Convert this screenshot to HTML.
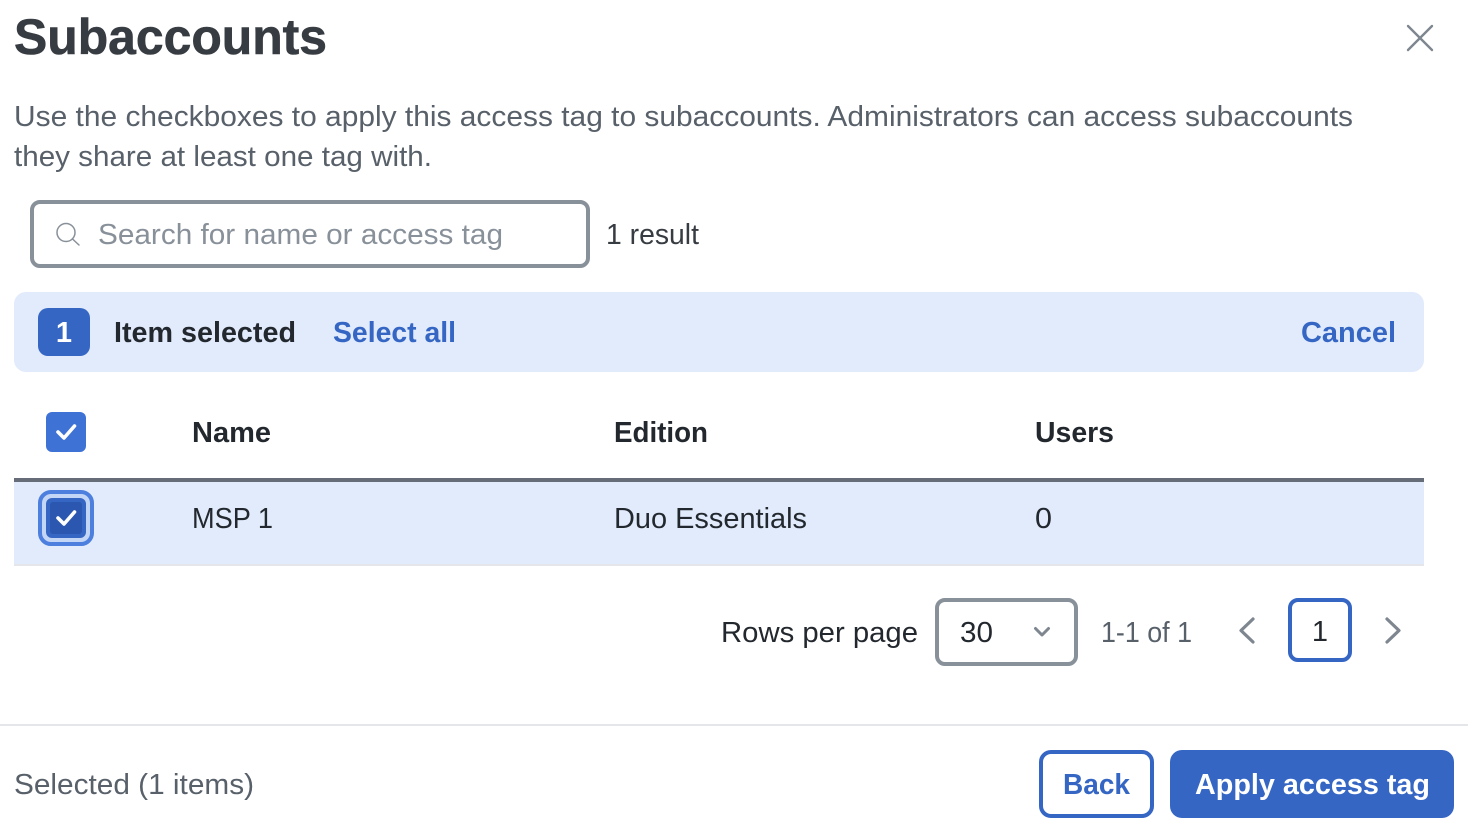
<!DOCTYPE html>
<html><head><meta charset="utf-8"><style>
html,body{margin:0;padding:0;background:#fff;width:1468px;height:832px;overflow:hidden}
svg{display:block}
text{font-family:"Liberation Sans",sans-serif;font-size:29px;white-space:pre}
.b{font-weight:700}
</style></head><body>
<svg width="1468" height="832" viewBox="0 0 1468 832" xmlns="http://www.w3.org/2000/svg">
<rect width="1468" height="832" fill="#fff"/>
<text x="14" y="54" class="b" style="font-size:50px" fill="#373c42" stroke="#373c42" stroke-width="0.6" textLength="313" lengthAdjust="spacingAndGlyphs">Subaccounts</text>
<path d="M1408 26L1432 50M1432 26L1408 50" stroke="#7e868f" stroke-width="2.4" stroke-linecap="round" fill="none"/>
<text x="14" y="126" fill="#58606a" textLength="1339" lengthAdjust="spacingAndGlyphs">Use the checkboxes to apply this access tag to subaccounts. Administrators can access subaccounts</text>
<text x="14" y="166" fill="#58606a" textLength="418" lengthAdjust="spacingAndGlyphs">they share at least one tag with.</text>

<rect x="32" y="202" width="556" height="64" rx="8" fill="#fff" stroke="#889099" stroke-width="4"/>
<circle cx="66" cy="232.500" r="9" fill="none" stroke="#889099" stroke-width="1.500"/>
<path d="M72.500 239L79 245" stroke="#889099" stroke-width="1.500" stroke-linecap="round"/>
<text x="98" y="244" fill="#889099" textLength="405" lengthAdjust="spacingAndGlyphs">Search for name or access tag</text>
<text x="606" y="244" fill="#373c42" textLength="93" lengthAdjust="spacingAndGlyphs">1 result</text>

<rect x="14" y="292" width="1410" height="80" rx="12" fill="#e1ebfc"/>
<rect x="38" y="308" width="52" height="48" rx="10" fill="#3566c4"/>
<text x="64" y="342" class="b" text-anchor="middle" fill="#fff">1</text>
<text x="114" y="342" class="b" fill="#23282e" textLength="182" lengthAdjust="spacingAndGlyphs">Item selected</text>
<text x="333" y="342" class="b" fill="#3566c4" textLength="123" lengthAdjust="spacingAndGlyphs">Select all</text>
<text x="1301" y="342" class="b" fill="#3566c4" textLength="95" lengthAdjust="spacingAndGlyphs">Cancel</text>

<rect x="46" y="412" width="40" height="40" rx="6" fill="#3e72d5"/>
<path d="M58 432L64 438L74.500 426" stroke="#fff" stroke-width="3.600" fill="none" stroke-linecap="round" stroke-linejoin="round"/>
<text x="192" y="442" class="b" fill="#23282e" textLength="79" lengthAdjust="spacingAndGlyphs">Name</text>
<text x="614" y="442" class="b" fill="#23282e" textLength="94" lengthAdjust="spacingAndGlyphs">Edition</text>
<text x="1035" y="442" class="b" fill="#23282e" textLength="79" lengthAdjust="spacingAndGlyphs">Users</text>

<rect x="14" y="482" width="1410" height="82" fill="#e1ebfc"/>
<rect x="14" y="478" width="1410" height="4" fill="#666d78"/>
<rect x="14" y="564" width="1410" height="2" fill="#e4e6ea"/>
<rect x="40" y="492" width="52" height="52" rx="11" fill="#c4d6f6" stroke="#4c7fde" stroke-width="4"/>
<rect x="46" y="498" width="40" height="40" rx="6" fill="#3566c4"/>
<rect x="50" y="502" width="32" height="32" rx="3" fill="#2b57b0"/>
<path d="M58 518L64 524L74.500 512" stroke="#fff" stroke-width="3.600" fill="none" stroke-linecap="round" stroke-linejoin="round"/>
<text x="192" y="528" fill="#23282e" textLength="81" lengthAdjust="spacingAndGlyphs">MSP 1</text>
<text x="614" y="528" fill="#23282e" textLength="193" lengthAdjust="spacingAndGlyphs">Duo Essentials</text>
<text x="1035" y="528" fill="#23282e" textLength="17" lengthAdjust="spacingAndGlyphs">0</text>

<text x="721" y="642" fill="#23282e" textLength="197" lengthAdjust="spacingAndGlyphs">Rows per page</text>
<rect x="937" y="600" width="139" height="64" rx="8" fill="#fff" stroke="#889099" stroke-width="4"/>
<text x="960" y="642" fill="#23282e" textLength="33" lengthAdjust="spacingAndGlyphs">30</text>
<path d="M1035.500 628.500L1042 635L1048.500 628.500" stroke="#7e868f" stroke-width="3" fill="none" stroke-linecap="round" stroke-linejoin="round"/>
<text x="1101" y="642" fill="#58606a" textLength="91" lengthAdjust="spacingAndGlyphs">1-1 of 1</text>
<path d="M1253 619L1241 630.500L1253 642" stroke="#7e868f" stroke-width="3.200" fill="none" stroke-linecap="round" stroke-linejoin="round"/>
<rect x="1290" y="600" width="60" height="60" rx="8" fill="#fff" stroke="#3566c4" stroke-width="4"/>
<text x="1320" y="641" text-anchor="middle" fill="#23282e">1</text>
<path d="M1387 619L1399 630.500L1387 642" stroke="#7e868f" stroke-width="3.200" fill="none" stroke-linecap="round" stroke-linejoin="round"/>

<rect x="0" y="724" width="1468" height="2" fill="#e4e6ea"/>
<text x="14" y="794" fill="#58606a" textLength="240" lengthAdjust="spacingAndGlyphs">Selected (1 items)</text>
<rect x="1041" y="752" width="111" height="64" rx="10" fill="#fff" stroke="#3566c4" stroke-width="4"/>
<text x="1063" y="794" class="b" fill="#3566c4" textLength="67" lengthAdjust="spacingAndGlyphs">Back</text>
<rect x="1170" y="750" width="284" height="68" rx="12" fill="#3566c4"/>
<text x="1195" y="794" class="b" fill="#fff" textLength="235" lengthAdjust="spacingAndGlyphs">Apply access tag</text>
</svg>
</body></html>
